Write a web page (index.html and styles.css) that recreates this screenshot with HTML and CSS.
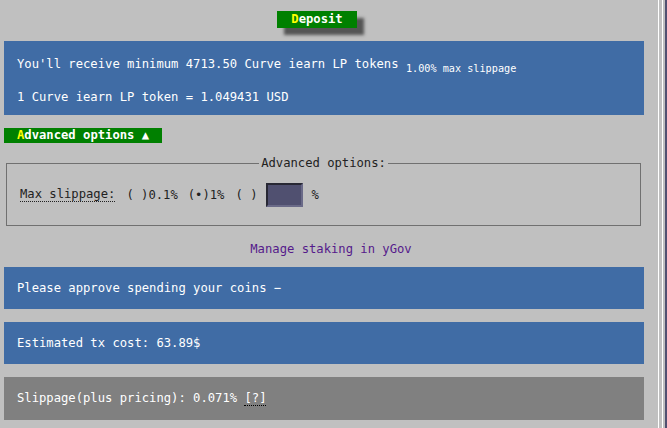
FILE: index.html
```html
<!DOCTYPE html>
<html>
<head>
<meta charset="utf-8">
<link rel="stylesheet" href="styles.css">
</head>
<body>
<div class="window">
  <div class="deposit-row">
    <button class="btn deposit"><span class="hot">D</span>eposit</button>
  </div>
  <div class="info main-info">
    <div class="line line1">You'll receive minimum 4713.50 Curve iearn LP tokens <span class="small">1.00% max slippage</span></div>
    <div class="line">1 Curve iearn LP token = 1.049431 USD</div>
  </div>
  <button class="btn adv"><span class="hot">A</span>dvanced options ▲</button>
  <fieldset class="options">
    <legend>Advanced options:</legend>
    <div class="slip-row">
      <abbr class="tip">Max slippage:</abbr>
      <span class="radio r1">( )0.1%</span>
      <span class="radio r2">(•)1%</span>
      <span class="radio r3">( )</span>
      <span class="custom"></span>
      <span class="pct">%</span>
    </div>
  </fieldset>
  <div class="link-row"><a class="ygov">Manage staking in yGov</a></div>
  <div class="info box first">Please approve spending your coins −</div>
  <div class="info box">Estimated tx cost: 63.89$</div>
  <div class="info box gray">Slippage(plus pricing): 0.071% <abbr class="q">[?]</abbr></div>
</div>
</body>
</html>
```
FILE: styles.css
```css
html, body {
  margin: 0;
  padding: 0;
  background: #c0c0c0;
  height: 100%;
  overflow: hidden;
}
body {
  font-family: "DejaVu Sans Mono", "Liberation Mono", monospace;
  font-size: 12.2px;
  color: #222;
}
.window {
  box-sizing: border-box;
  width: 659px;
  min-height: 428px;
  padding: 0 14px 0 4px;
  border-right: 1px solid #fff;
  box-shadow: 3px 0 0 #c0c0c0, 4px 0 0 #fff, 6px 0 0 #c0c0c0, 8px 0 0 #505070;
  display: flex;
  flex-direction: column;
  align-items: flex-start;
}
.btn {
  font-family: inherit;
  font-size: 12.2px;
  font-weight: bold;
  color: #fff;
  background: #008000;
  border: none;
  padding: 0;
  margin: 0;
  line-height: 15px;
  text-align: left;
}
.hot { color: #ffff00; }
.deposit-row {
  padding-top: 11px;
  padding-left: 273px;
}
.deposit {
  width: 80px;
  height: 17px;
  text-align: center;
  box-shadow: 7px 7px 3px rgba(40, 40, 40, 0.7);
}
.info {
  box-sizing: border-box;
  width: 640px;
  background: #406ca5;
  color: #fff;
  padding: 0 13px;
}
.main-info {
  margin-top: 13px;
  height: 74px;
  padding-top: 15px;
  display: flex;
  flex-direction: column;
  gap: 17px;
}
.line {
  line-height: 16px;
  height: 16px;
  white-space: nowrap;
}
.small {
  font-size: 10.2px;
  vertical-align: -4px;
  line-height: 10px;
}
.adv {
  margin-top: 13px;
  width: 158px;
  height: 15px;
  padding-left: 13px;
}
.options {
  box-sizing: border-box;
  margin: 12px 0 0 2px;
  width: 635px;
  height: 71px;
  border: 1px solid #707070;
  padding: 6px 13px 0 13px;
}
.options legend {
  margin: 0 auto;
  padding: 0 2px;
  line-height: 16px;
  color: #222;
}
.slip-row {
  display: flex;
  align-items: center;
  height: 24px;
  margin-top: 6px;
  white-space: pre;
}
.tip {
  text-decoration: none;
  border-bottom: 1px dotted #222;
  line-height: 13px;
  margin-right: 11px;
}
.r1 { margin-right: 10px; }
.r2 { margin-right: 11px; }
.r3 { margin-right: 9px; }
.custom {
  box-sizing: border-box;
  width: 37px;
  height: 24px;
  background: #505070;
  border: 2px inset #6a6a88;
  margin-right: 8px;
}
.link-row {
  width: 640px;
  text-align: center;
  padding-left: 14px;
  box-sizing: border-box;
  margin-top: 15px;
  line-height: 16px;
}
.ygov {
  color: #551a8b;
  text-decoration: none;
}
.box {
  height: 42px;
  line-height: 42px;
  white-space: nowrap;
  margin-top: 13px;
}
.box.first { margin-top: 10px; }
.gray { background: #808080; height: 43px; }
.q {
  text-decoration: none;
  border-bottom: 1px dotted #000;
  line-height: 13px;
  display: inline-block;
}
```
